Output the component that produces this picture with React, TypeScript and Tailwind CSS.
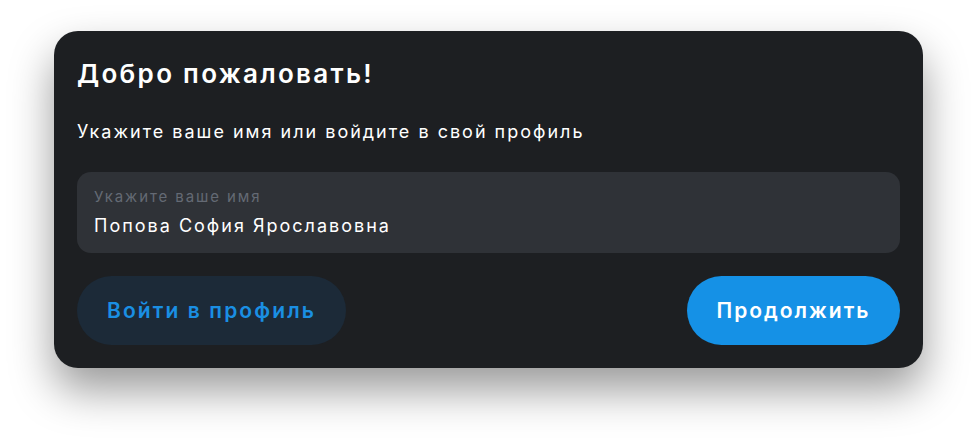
export default function App() {
  return (
    <div
      className="flex h-[446px] w-[978px] items-start bg-white pt-[31px] pl-[54px]"
      style={{ fontFamily: "Inter, 'Noto Sans', sans-serif" }}
    >
      <div className="flex w-[869px] flex-col rounded-[24px] bg-[#1d1f22] px-[23px] pt-[26px] pb-[23px] shadow-[0_22px_44px_rgba(0,0,0,0.4)]">
        <h1 className="text-[26px] leading-[34px] font-semibold tracking-[2.3px] text-white">Добро пожаловать!</h1>

        <p className="mt-[28px] text-[18px] leading-[26px] tracking-[2px] text-white">
          Укажите ваше имя или войдите в свой профиль
        </p>

        {/* Name field */}
        <label className="mt-[27px] flex h-[81px] flex-col rounded-[14px] bg-[#2f3237] px-[17px] pt-[15px]">
          <span className="text-[15px] leading-[20px] tracking-[1.9px] text-[#646a74]">Укажите ваше имя</span>
          <input
            defaultValue="Попова София Ярославовна"
            className="mt-[7px] bg-transparent text-[18px] leading-[24px] tracking-[2px] text-white outline-none"
          />
        </label>

        <div className="mt-[23px] flex items-center justify-between">
          <button className="h-[69px] w-[269px] rounded-full bg-[#1c2a38] text-[21px] font-semibold tracking-[2.1px] text-[#1a8fe3]">
            Войти в профиль
          </button>
          <button className="h-[69px] w-[213px] rounded-full bg-[#1591e6] text-[21px] font-semibold tracking-[2px] text-white">
            Продолжить
          </button>
        </div>
      </div>
    </div>
  );
}
